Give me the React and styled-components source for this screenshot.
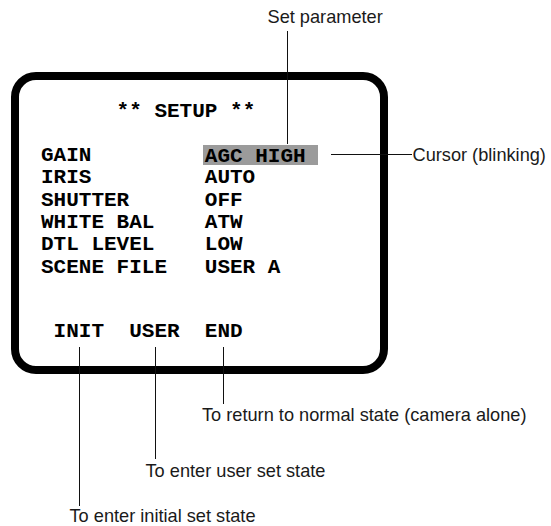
import React from "react";
import styled, { createGlobalStyle } from "styled-components";

const Global = createGlobalStyle`
  html, body { margin: 0; padding: 0; background: #fff; }
  #root { width: 551px; height: 526px; }
`;

const Diagram = styled.div`
  position: relative;
  width: 551px;
  height: 526px;
  box-sizing: border-box;
  padding: 72px 0 0 11px;
  background: #fff;
  overflow: hidden;
`;

const Screen = styled.div`
  box-sizing: border-box;
  width: 377px;
  height: 302px;
  border: 8px solid #000;
  border-radius: 25px;
  padding: 20.6px 0 0 22px;
  font-family: "Liberation Mono", "Courier New", monospace;
  font-weight: 700;
  font-size: 21px;
  line-height: 22.3px;
  color: #000;
  white-space: pre;
`;

const Title = styled.div`
  padding-left: 6ch;
  margin-bottom: 22.3px;
`;

const Menu = styled.div`
  display: grid;
  grid-template-columns: 13ch auto;
  grid-auto-rows: 22.3px;
`;

const Value = styled.div`
  display: flex;
  align-items: baseline;
`;

const Cursor = styled.span`
  display: inline-block;
  width: 9ch;
  margin-left: -2px;
  padding: 3px 0 0 2px;
  line-height: 17.3px;
  background: #9b9b9b;
`;

const Footer = styled.div`
  margin-top: 42.2px;
  padding-left: 1ch;
`;

/* A callout: a leader line and its label, placed on the drawing */
const Callout = styled.div`
  position: absolute;
  left: ${(p) => p.$x}px;
  top: ${(p) => p.$y}px;
  display: flex;
  flex-direction: ${(p) => p.$dir};
  align-items: ${(p) => (p.$dir === "row" ? "center" : "flex-start")};
  gap: ${(p) => p.$gap}px;
`;

const VLine = styled.div`
  width: 1px;
  height: ${(p) => p.$len}px;
  margin-left: ${(p) => p.$inset || 0}px;
  background: #111;
`;

const HLine = styled.div`
  width: ${(p) => p.$len}px;
  height: 1px;
  margin-top: -1px;
  background: #111;
`;

const Note = styled.div`
  font-family: "Liberation Sans", Arial, sans-serif;
  font-size: 18.2px;
  line-height: 18.2px;
  color: #1a1a1a;
  white-space: nowrap;
`;

const rows = [
  ["GAIN", "AGC HIGH", true],
  ["IRIS", "AUTO"],
  ["SHUTTER", "OFF"],
  ["WHITE BAL", "ATW"],
  ["DTL LEVEL", "LOW"],
  ["SCENE FILE", "USER A"],
];

const bottomNotes = [
  { x: 202, inset: 21, len: 57, gap: 1.6, text: "To return to normal state (camera alone)" },
  { x: 145.5, inset: 9.5, len: 112, gap: 2.6, text: "To enter user set state" },
  { x: 69.5, inset: 9.5, len: 159, gap: 1.4, text: "To enter initial set state" },
];

export default function App() {
  return (
    <>
      <Global />
      <Diagram>
        <Screen>
          <Title>** SETUP **</Title>
          <Menu>
            {rows.map(([label, value, active]) => (
              <React.Fragment key={label}>
                <div>{label}</div>
                <Value>{active ? <Cursor>{value}</Cursor> : value}</Value>
              </React.Fragment>
            ))}
          </Menu>
          <Footer>{"INIT  USER  END"}</Footer>
        </Screen>

        <Callout $x={267.5} $y={7.6} $dir="column" $gap={5.2}>
          <Note>Set parameter</Note>
          <VLine $inset={19.5} $len={113} />
        </Callout>

        <Callout $x={331} $y={145.6} $dir="row" $gap={0.5}>
          <HLine $len={81} />
          <Note>Cursor (blinking)</Note>
        </Callout>

        {bottomNotes.map((n) => (
          <Callout key={n.text} $x={n.x} $y={347} $dir="column" $gap={n.gap}>
            <VLine $inset={n.inset} $len={n.len} />
            <Note>{n.text}</Note>
          </Callout>
        ))}
      </Diagram>
    </>
  );
}
